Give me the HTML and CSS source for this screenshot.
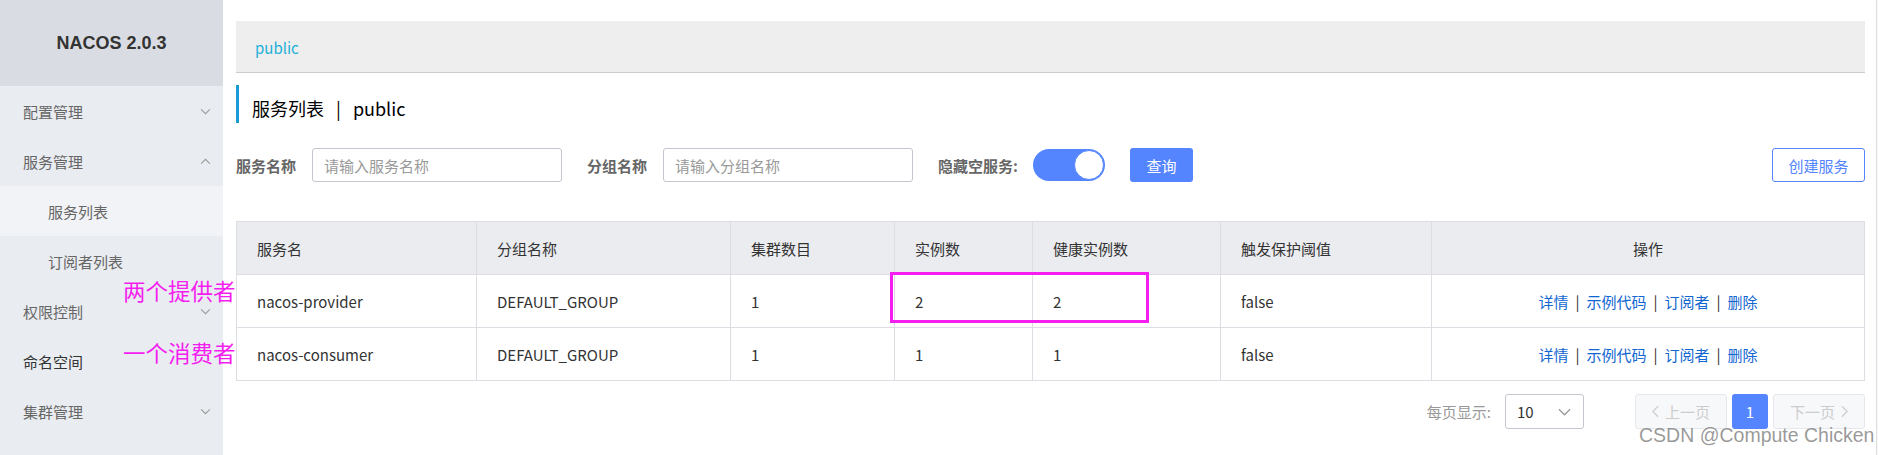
FILE: index.html
```html
<!DOCTYPE html>
<html lang="zh-CN">
<head>
  <meta charset="UTF-8">
  <title>Nacos 服务列表</title>
  <link rel="stylesheet" href="styles.css">
</head>
<body>

  <div class="layout">
    <aside class="sidebar">
      <div class="brand">NACOS 2.0.3</div>
      <ul class="menu">
        <li class="menu-item">
          <span>配置管理</span>
          <svg class="arrow" viewBox="0 0 12 8"><polyline points="1,1.5 6,6.5 11,1.5"/></svg>
        </li>
        <li class="menu-item">
          <span>服务管理</span>
          <svg class="arrow" viewBox="0 0 12 8"><polyline points="1,6.5 6,1.5 11,6.5"/></svg>
        </li>
        <li class="menu-sub active">服务列表</li>
        <li class="menu-sub">订阅者列表</li>
        <li class="menu-item">
          <span>权限控制</span>
          <svg class="arrow" viewBox="0 0 12 8"><polyline points="1,1.5 6,6.5 11,1.5"/></svg>
        </li>
        <li class="menu-item plain">
          <span>命名空间</span>
        </li>
        <li class="menu-item">
          <span>集群管理</span>
          <svg class="arrow" viewBox="0 0 12 8"><polyline points="1,1.5 6,6.5 11,1.5"/></svg>
        </li>
      </ul>
    </aside>

    <main class="main">
      <div class="breadcrumb">public</div>

      <h1 class="page-title">服务列表<span class="title-sep">|</span>public</h1>

      <div class="search-bar">
        <label class="field-label">服务名称</label>
        <input class="text-input" type="text" placeholder="请输入服务名称">
        <label class="field-label">分组名称</label>
        <input class="text-input" type="text" placeholder="请输入分组名称">
        <label class="field-label switch-label">隐藏空服务:</label>
        <div class="switch"><span class="switch-knob"></span></div>
        <button class="btn btn-primary">查询</button>
        <button class="btn btn-outline create-btn">创建服务</button>
      </div>

      <table class="service-table">
        <colgroup>
          <col style="width: 240px">
          <col style="width: 254px">
          <col style="width: 164px">
          <col style="width: 138px">
          <col style="width: 188px">
          <col style="width: 211px">
          <col style="width: 433px">
        </colgroup>
        <thead>
          <tr>
            <th>服务名</th>
            <th>分组名称</th>
            <th>集群数目</th>
            <th>实例数</th>
            <th>健康实例数</th>
            <th>触发保护阈值</th>
            <th class="ops">操作</th>
          </tr>
        </thead>
        <tbody>
          <tr>
            <td>nacos-provider</td>
            <td>DEFAULT_GROUP</td>
            <td>1</td>
            <td>2</td>
            <td>2</td>
            <td>false</td>
            <td class="ops">
              <a href="#">详情</a><span class="bar">|</span><a href="#">示例代码</a><span class="bar">|</span><a href="#">订阅者</a><span class="bar">|</span><a href="#">删除</a>
            </td>
          </tr>
          <tr>
            <td>nacos-consumer</td>
            <td>DEFAULT_GROUP</td>
            <td>1</td>
            <td>1</td>
            <td>1</td>
            <td>false</td>
            <td class="ops">
              <a href="#">详情</a><span class="bar">|</span><a href="#">示例代码</a><span class="bar">|</span><a href="#">订阅者</a><span class="bar">|</span><a href="#">删除</a>
            </td>
          </tr>
        </tbody>
      </table>

      <div class="pagination">
        <span class="page-size-label">每页显示:</span>
        <div class="page-size">
          <span>10</span>
          <svg class="select-arrow" viewBox="0 0 14 8"><polyline points="1,1 7,7 13,1"/></svg>
        </div>
        <div class="pager">
          <button class="pager-btn disabled">
            <svg class="pager-icon" viewBox="0 0 8 14"><polyline points="7,1 1,7 7,13"/></svg>
            上一页
          </button>
          <button class="pager-btn current">1</button>
          <button class="pager-btn disabled">
            下一页
            <svg class="pager-icon" viewBox="0 0 8 14"><polyline points="1,1 7,7 1,13"/></svg>
          </button>
        </div>
      </div>
    </main>

    <div class="scrollbar"></div>
  </div>

  <!-- annotations drawn on top of the screenshot -->
  <div class="note note-provider">两个提供者</div>
  <div class="note note-consumer">一个消费者</div>
  <div class="highlight-box"></div>
  <div class="watermark">CSDN @Compute Chicken</div>

</body>
</html>
```

FILE: styles.css
```css
* {
  box-sizing: border-box;
}

body {
  margin: 0;
  background: #fff;
  color: #333;
  font-family: 'Noto Sans CJK SC', 'Open Sans', sans-serif;
  font-size: 15px;
  position: relative;
  height: 455px;
  overflow: hidden;
}

.layout {
  display: flex;
  height: 455px;
}

/* sidebar */
.sidebar {
  width: 223px;
  flex-shrink: 0;
  background: #e9ecf0;
}

.brand {
  height: 86px;
  background: #d9dde3;
  display: flex;
  align-items: center;
  justify-content: center;
  font-family: 'Liberation Sans', 'Noto Sans CJK SC', sans-serif;
  font-weight: bold;
  font-size: 18px;
  color: #333;
}

.menu {
  list-style: none;
  margin: 0;
  padding: 0;
}

.menu-item,
.menu-sub {
  height: 50px;
  display: flex;
  align-items: center;
  color: #666;
}

.menu-item {
  padding: 0 12px 0 23px;
  justify-content: space-between;
}

.menu-item.plain {
  color: #333;
}

.menu-sub {
  padding-left: 48px;
}

.menu-sub.active {
  background: #f2f3f6;
}

.arrow {
  width: 11px;
  height: 7px;
  fill: none;
  stroke: #999;
  stroke-width: 1.2;
}

/* main content */
.main {
  flex: 1;
  padding: 21px 11px 0 13px;
}

.scrollbar {
  width: 3px;
  border-left: 1px solid #dedede;
  background: #f7f7f7;
}

.breadcrumb {
  height: 52px;
  padding: 3px 0 0 19px;
  line-height: 48px;
  background: #eee;
  border-bottom: 1px solid #ccc;
  color: #1db0d8;
}

.page-title {
  margin: 12px 0 0;
  height: 38px;
  padding: 9px 0 0 13px;
  line-height: 29px;
  border-left: 3px solid #1a9bd7;
  font-size: 18px;
  font-weight: normal;
  color: #000;
}

.title-sep {
  margin: 0 12px;
}

.search-bar {
  margin-top: 25px;
  height: 34px;
  display: flex;
  align-items: center;
}

.field-label {
  font-weight: bold;
  color: #666;
  margin-right: 16px;
}

.switch-label {
  margin-right: 15px;
}

.text-input {
  width: 250px;
  height: 34px;
  border: 1px solid #c4c6cf;
  border-radius: 3px;
  padding: 0 11px;
  margin-right: 25px;
  font-family: inherit;
  font-size: 15px;
  outline: none;
}

.text-input::placeholder {
  color: #999;
}

.switch {
  width: 72px;
  height: 32px;
  border-radius: 16px;
  background: #5584ff;
  display: flex;
  justify-content: flex-end;
  padding: 1px;
  margin-right: 25px;
}

.switch-knob {
  width: 30px;
  height: 30px;
  border-radius: 50%;
  background: #fff;
  border: 1px solid #5584ff;
}

.btn {
  height: 34px;
  border-radius: 3px;
  font-family: inherit;
  font-size: 15px;
  cursor: pointer;
  padding: 0;
}

.btn-primary {
  width: 63px;
  border: none;
  background: #5584ff;
  color: #fff;
}

.btn-outline {
  width: 93px;
  background: #fff;
  border: 1px solid #5584ff;
  color: #5584ff;
}

.create-btn {
  margin-left: auto;
}

/* table */
.service-table {
  margin-top: 39px;
  width: 100%;
  table-layout: fixed;
  border-collapse: collapse;
  border: 1px solid #dcdee3;
}

.service-table th,
.service-table td {
  height: 53px;
  padding: 0 20px;
  border: 1px solid #dcdee3;
  text-align: left;
  font-weight: normal;
  color: #333;
}

.service-table th {
  background: #ebecf0;
}

.service-table .ops {
  text-align: center;
}

.ops a {
  color: #1166d0;
  text-decoration: none;
}

.ops .bar {
  margin: 0 7px;
  color: #333;
}

/* pagination */
.pagination {
  margin-top: 13px;
  height: 35px;
  display: flex;
  align-items: center;
  justify-content: flex-end;
}

.page-size-label {
  color: #999;
  margin-right: 14px;
}

.page-size {
  width: 79px;
  height: 35px;
  border: 1px solid #c4c6cf;
  border-radius: 3px;
  display: flex;
  align-items: center;
  justify-content: space-between;
  padding: 0 12px 0 11px;
  color: #333;
}

.select-arrow {
  width: 13px;
  height: 8px;
  fill: none;
  stroke: #999;
  stroke-width: 1.3;
}

.pager {
  display: flex;
  gap: 5px;
  margin-left: 51px;
}

.pager-btn {
  height: 35px;
  border-radius: 3px;
  font-family: inherit;
  font-size: 15px;
  display: flex;
  align-items: center;
  justify-content: center;
  gap: 6px;
  padding: 0;
}

.pager-btn.disabled {
  width: 92px;
  background: #f7f8fa;
  border: 1px solid #e6e7eb;
  color: #ccc;
}

.pager-btn.current {
  width: 36px;
  background: #5584ff;
  border: none;
  color: #fff;
}

.pager-icon {
  width: 7px;
  height: 13px;
  fill: none;
  stroke: #ccc;
  stroke-width: 1.3;
}

/* annotation overlays */
.note {
  position: absolute;
  left: 123px;
  font-family: 'Noto Sans CJK SC', sans-serif;
  font-size: 22.5px;
  line-height: 24px;
  color: #f51ef0;
}

.note-provider {
  top: 278px;
}

.note-consumer {
  top: 340px;
}

.highlight-box {
  position: absolute;
  left: 890px;
  top: 272px;
  width: 259px;
  height: 51px;
  border: 3px solid #f51ef0;
}

.watermark {
  position: absolute;
  left: 1639px;
  top: 424px;
  font-family: 'Liberation Sans', sans-serif;
  font-size: 19.5px;
  line-height: 22px;
  color: rgba(120, 120, 120, 0.75);
}
```
